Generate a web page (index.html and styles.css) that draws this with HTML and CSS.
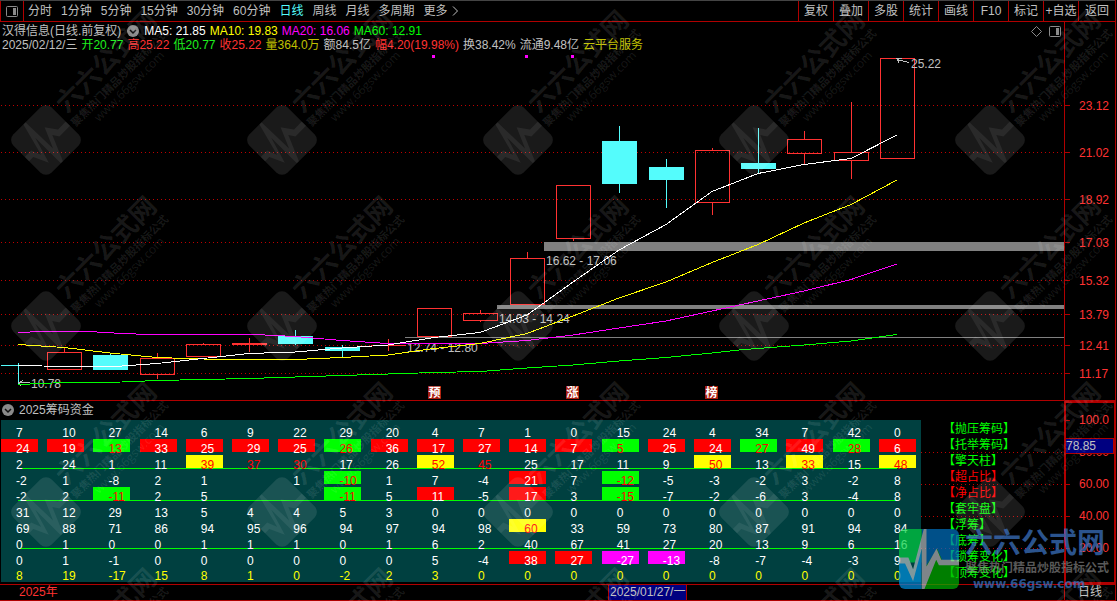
FILE: index.html
```html
<!DOCTYPE html>
<html lang="zh-CN">
<head>
<meta charset="utf-8">
<meta name="viewport" content="width=device-width, initial-scale=1">
<title>汉得信息 日线</title>
<link rel="stylesheet" href="styles.css">
</head>
<body>
<div class="app">
  <nav class="topbar">
    <button class="panel-toggle" aria-label="侧栏">
      <svg width="12" height="11" viewBox="0 0 12 11"><rect x=".5" y=".5" width="11" height="10" rx="1" fill="none" stroke="#8a8a8a"/><rect x="7" y="2" width="3" height="7" fill="#8a8a8a"/></svg>
    </button>
    <div class="periods">
      <button>分时</button><button>1分钟</button><button>5分钟</button><button>15分钟</button><button>30分钟</button><button>60分钟</button><button class="active">日线</button><button>周线</button><button>月线</button><button>多周期</button><button class="more">更多<svg width="7" height="10" viewBox="0 0 7 10"><path d="M1 .5 5.5 5 1 9.500" fill="none" stroke="#c0c0c0"/></svg></button>
    </div>
    <div class="tools">
      <button>复权</button><button>叠加</button><button>多股</button><button>统计</button><button>画线</button><button>F10</button><button>标记</button><button>+自选</button><button class="wide">返回</button>
    </div>
  </nav>

  <section class="price">
    <header class="quote">
      <div class="quote-text">
        <div class="line">
          <span class="name">汉得信息(日线.前复权)</span>
          <svg class="drop" width="12" height="12" viewBox="0 0 12 12"><circle cx="6" cy="6" r="6" fill="#8a8a8a"/><path d="M3 5l3 3 3-3" fill="none" stroke="#111" stroke-width="1.500"/></svg>
          <span class="white">MA5: 21.85</span><span class="yellow">MA10: 19.83</span><span class="magenta">MA20: 16.06</span><span class="green">MA60: 12.91</span>
        </div>
        <div class="line">
          <span>2025/02/12/三</span><span class="lime">开20.77</span><span class="up">高25.22</span><span class="lime">低20.77</span><span class="up">收25.22</span><span class="gold">量364.0万</span><span>额84.5亿</span><span class="up">幅4.20(19.98%)</span><span>换38.42%</span><span>流通9.48亿</span><span class="gold">云平台服务</span>
        </div>
      </div>
      <div class="quote-icons">
        <svg width="11" height="11" viewBox="0 0 11 11"><path d="M5.500.5l5 5-5 5-5-5z" fill="none" stroke="#8a8a8a"/></svg>
        <svg width="12" height="11" viewBox="0 0 12 11"><rect x=".5" y=".5" width="11" height="10" rx="1" fill="none" stroke="#8a8a8a"/><rect x="7" y="2" width="3" height="7" fill="#8a8a8a"/></svg>
      </div>
      <div class="quote-axis"></div>
    </header>

    <svg class="kline" viewBox="0 52 1115 348" role="img" aria-label="日线K线图">
      <path class="grid" d="M1 105.500H1064M1 152.500H1064M1 199.500H1064M1 242.500H1064M1 280.500H1064M1 314.500H1064M1 345.500H1064M1 373.500H1064"/>
      <path class="axis" d="M1064.500 52V400M1065 105.500h5M1065 152.500h5M1065 199.500h5M1065 242.500h5M1065 280.500h5M1065 314.500h5M1065 345.500h5M1065 373.500h5"/>
      <g class="scale">
        <text x="1079" y="110">23.12</text><text x="1079" y="157">21.02</text><text x="1079" y="204">18.92</text><text x="1079" y="247">17.03</text><text x="1079" y="285">15.32</text><text x="1079" y="319">13.79</text><text x="1079" y="350">12.41</text><text x="1079" y="378">11.17</text>
      </g>
      <g class="rise">
        <path d="M64.500 348V352M157.500 353V358M157.500 374V379M203.500 343V344M249.500 338V352M388.500 339V351M480.500 310V313M480.500 321V322M527.500 252V258M573.500 239V241M712.500 148V150M712.500 203V215M804.500 131V139M804.500 154V164M851.500 102V152M851.500 161V179M371 345.500H406M232 343.500H267M232 344.500H267"/>
        <rect x="47.500" y="352.500" width="34" height="17"/><rect x="140.500" y="358.500" width="34" height="16"/><rect x="186.500" y="344.500" width="34" height="12"/><rect x="417.500" y="308.500" width="34" height="28"/><rect x="463.500" y="313.500" width="34" height="7"/><rect x="510.500" y="258.500" width="34" height="46"/><rect x="556.500" y="185.500" width="34" height="53"/><rect x="695.500" y="150.500" width="34" height="52"/><rect x="787.500" y="139.500" width="34" height="14"/><rect x="834.500" y="152.500" width="34" height="8"/><rect x="880.500" y="58.500" width="34" height="100"/>
      </g>
      <g class="fall">
        <path d="M1 365.500H19M18.500 363V384M110.500 353V355M295.500 330V345M342.500 345V357M619.500 126V193M666.500 159V208M758.500 128V173"/>
        <rect x="93" y="355" width="35" height="15"/><rect x="278" y="336" width="35" height="8"/><rect x="325" y="347" width="35" height="4"/><rect x="602" y="141" width="35" height="43"/><rect x="649" y="167" width="35" height="13"/><rect x="741" y="163" width="35" height="6"/>
      </g>
      <g class="gap">
        <rect x="544" y="242" width="520" height="9"/><rect x="497" y="305" width="567" height="4"/><rect x="405" y="337" width="659" height="1"/>
      </g>
      <g class="note">
        <text x="546" y="265">16.62 - 17.06</text><text x="499" y="323">14.03 - 14.24</text><text x="407" y="352">12.74 - 12.80</text><text x="911" y="68">25.22</text><text x="31" y="388">10.78</text>
        <path d="M909 62.500 897 59.500M902 58.500h-5l2 4M30 382.500H19M23 380.500l-4 2 2 3"/>
      </g>
      <g class="ma">
        <polyline stroke="#0f0" points="18,384.500 30,384 64,382.500 122,382 157,380.500 203,379.500 249,378.500 295,377 342,375.500 388,374 434,372.500 480,371.500 527,368 573,365 619,361 666,357.500 712,353 744,349.500 804,345 851,341 897,334.500"/>
        <polyline stroke="#f0f" points="18,332.500 42,331.500 88,331.500 122,333.500 150,334.500 255,334.500 295,336.500 342,340.500 388,343.500 480,343.500 527,340.500 573,335 619,328 666,321 712,311 744,304 804,291 851,279.500 897,264"/>
        <polyline stroke="#ff0" points="18,344.500 64,347.500 110,353 157,357.500 203,359 249,359.500 295,359.500 342,357.500 388,355 434,348.500 480,343.500 527,333.500 573,316 619,298 666,282 712,262.500 758,244.500 804,223 851,204.500 897,180"/>
        <polyline stroke="#fff" points="18,365.500 42,366 115,366.500 157,363.500 203,358.500 249,353.500 295,352 342,348 388,345 434,337.500 480,332.500 527,315 573,282 619,250 666,224.500 712,191.500 758,173.500 804,164.500 851,158.500 897,135"/>
      </g>
      <g fill="#f0f"><rect x="432" y="55" width="3" height="3"/><rect x="525" y="55" width="3" height="3"/><rect x="571" y="55" width="3" height="3"/></g>
      <g class="flag">
        <rect x="428" y="386" width="13" height="13"/><text x="434.500" y="397">预</text>
        <rect x="566" y="386" width="13" height="13"/><text x="572.500" y="397">涨</text>
        <rect x="705" y="386" width="13" height="13"/><text x="711.500" y="397">榜</text>
      </g>
    </svg>
  </section>

  <section class="chips">
    <div class="chips-main">
      <header class="chips-head">
        <svg width="12" height="12" viewBox="0 0 12 12"><circle cx="6" cy="6" r="6" fill="#8a8a8a"/><path d="M3 5l3 3 3-3" fill="none" stroke="#111" stroke-width="1.500"/></svg>
        <span>2025筹码资金</span>
      </header>
      <div class="chips-body">
        <div class="sheet">
          <table>
            <colgroup><col span="19"><col class="last"></colgroup>
            <tbody>
            <tr><td>7<td>10<td>27<td>14<td>6<td>9<td>22<td>29<td>20<td>4<td>7<td>1<td>0<td>15<td>24<td>4<td>34<td>7<td>42<td>0</tr>
            <tr><td class="r">24<td class="r">19<td class="g">13<td class="r">33<td class="r">25<td class="r">29<td class="r">25<td class="g">26<td class="r">36<td class="r">17<td class="r">27<td class="r">14<td class="r">7<td class="g">5<td class="r">25<td class="r">24<td class="g">27<td class="r">49<td class="g">28<td class="r">6</tr>
            <tr class="rule"><td>2<td>24<td>1<td>11<td class="y">39<td class="hot">37<td class="hot">30<td>17<td>26<td class="y">52<td class="hot">45<td>25<td>17<td>11<td>9<td class="y">50<td>13<td class="y">33<td>15<td class="y">48</tr>
            <tr><td>-2<td>1<td>-8<td>2<td>1<td><td>1<td class="g">-10<td>1<td>7<td>-4<td class="r">21<td>7<td class="g">-12<td>-5<td>-3<td>-2<td>3<td>-2<td>8</tr>
            <tr class="rule"><td>-2<td>2<td class="g">-11<td>2<td>5<td><td><td class="g">-11<td>5<td class="r">11<td>-5<td class="r">17<td>3<td class="g">-15<td>-7<td>-2<td>-6<td>3<td>-4<td>8</tr>
            <tr><td>31<td>12<td>29<td>13<td>5<td>4<td>4<td>5<td>3<td>0<td>0<td>0<td>0<td>0<td>0<td>0<td>0<td>0<td>0<td>0</tr>
            <tr><td>69<td>88<td>71<td>86<td>94<td>95<td>96<td>94<td>97<td>94<td>98<td class="y">60<td>33<td>59<td>73<td>80<td>87<td>91<td>94<td>84</tr>
            <tr class="rule"><td>0<td>1<td>0<td>0<td>1<td>1<td>1<td>0<td>1<td>6<td>2<td>40<td>67<td>41<td>27<td>20<td>13<td>9<td>6<td>16</tr>
            <tr><td>0<td>1<td>-1<td>0<td>0<td>0<td>0<td>0<td>0<td>5<td>-4<td class="r">38<td class="r">27<td class="m">-27<td class="m">-13<td>-8<td>-7<td>-4<td>-3<td>9</tr>
            <tr class="sum"><td>8<td>19<td>-17<td>15<td>8<td>1<td>0<td>-2<td>2<td>3<td>0<td>0<td>0<td>0<td>0<td>0<td>0<td>0<td>0<td>0</tr>
            </tbody>
          </table>
        </div>
        <ul class="legend">
          <li>【抛压筹码】</li><li>【托举筹码】</li><li>【擎天柱】</li><li class="hot">【超占比】</li><li class="hot">【净占比】</li><li>【套牢盘】</li><li>【浮筹】</li><li>【底筹】</li><li>【锁筹变化】</li><li>【顶筹变化】</li>
        </ul>
      </div>
    </div>
    <aside class="chips-axis">
      <ul><li>100.0</li><li>80.00</li><li>60.00</li><li>40.00</li><li>20.00</li></ul>
      <span class="cursor-value">78.85</span>
    </aside>
  </section>

  <footer class="timebar">
    <span class="year">2025年</span>
    <span class="cursor-date">2025/01/27/一</span>
    <button class="period">日线</button>
  </footer>

  <svg class="watermark" aria-hidden="true">
    <defs>
      <g id="mark" transform="rotate(-45)">
        <rect x="-27" y="-27" width="54" height="54" rx="8" fill="#fff" fill-opacity=".1"/>
        <path d="M-27-3h9l4 10L-5-27h3L-1 11 8-10l8 11h11v6H12L8 1-3 27h-3V-9l-8 27-7-15h-6z" fill="#fff" fill-opacity=".07"/>
        <text class="wm-title" x="33" y="-4">六六公式网</text>
        <text class="wm-sub" x="30" y="12">聚焦热门精品炒股指标公式</text>
        <text class="wm-url" x="50" y="25">www.66gsw.com</text>
      </g>
    </defs>
    <use href="#mark" x="46" y="140"/><use href="#mark" x="282" y="140"/><use href="#mark" x="518" y="140"/><use href="#mark" x="754" y="140"/><use href="#mark" x="990" y="140"/>
    <use href="#mark" x="46" y="326"/><use href="#mark" x="282" y="326"/><use href="#mark" x="518" y="326"/><use href="#mark" x="754" y="326"/><use href="#mark" x="990" y="326"/>
    <use href="#mark" x="46" y="512"/><use href="#mark" x="282" y="512"/><use href="#mark" x="518" y="512"/><use href="#mark" x="754" y="512"/><use href="#mark" x="990" y="512"/>
    <use href="#mark" x="46" y="698"/><use href="#mark" x="282" y="698"/><use href="#mark" x="518" y="698"/><use href="#mark" x="754" y="698"/><use href="#mark" x="990" y="698"/>
  </svg>

  <div class="brand">
    <svg width="60" height="60" viewBox="0 0 179 179">
      <defs><clipPath id="round"><rect width="179" height="179" rx="18"/></clipPath></defs>
      <g clip-path="url(#round)">
        <path d="M0 0h78v100H0z" fill="#00d040"/><path d="M0 90h28l14 40L68 50v129H0z" fill="#0090e0"/>
        <path d="M68 0h111v110H68z" fill="#0072c4"/><path d="M68 179V130l46-70 20 45h45v74z" fill="#00b400"/>
        <path d="M0 85h28l14 35L74 0h8v112l30-54 14 34h53v16h-60l-8-16-35 87h-8V58l-26 98-24-53H0z" fill="#b4bec4"/>
      </g>
    </svg>
    <div class="brand-text">
      <strong>六六公式网</strong>
      <span>聚焦热门精品炒股指标公式</span>
      <b>www.66gsw.com</b>
    </div>
  </div>
</div>
</body>
</html>
```
FILE: styles.css
```css
* { box-sizing: border-box; }

body {
  margin: 0;
  background: #000;
  color: #c0c0c0;
  font: 12px/14px "Liberation Sans", "Noto Sans CJK SC", sans-serif;
}

button {
  margin: 0;
  padding: 0;
  border: 0;
  background: none;
  color: inherit;
  font: inherit;
  white-space: nowrap;
  cursor: pointer;
}

ul { margin: 0; padding: 0; list-style: none; }

.app {
  position: relative;
  margin-right: 1px;
  border-right: 1px solid #b00000;
  overflow: hidden;
}

/* top bar */
.topbar {
  display: flex;
  height: 22px;
  border-top: 1px solid #444;
  border-bottom: 1px solid #b00000;
}
.panel-toggle {
  display: flex;
  align-items: center;
  justify-content: center;
  width: 24px;
  border: solid #b00000;
  border-width: 0 1px;
}
.periods { display: flex; gap: 9px; padding-left: 4px; flex: 1; }
.periods .active { color: #54fcfc; }
.more { display: flex; align-items: center; gap: 4px; }
.tools { display: flex; }
.tools button { width: 35px; border-left: 1px solid #b00000; }
.tools .wide { width: 37px; }

/* quote header */
.quote { display: flex; height: 30px; }
.quote-text { flex: 1; padding: 2px 0 0 2px; white-space: nowrap; }
.line { display: flex; align-items: center; gap: 4px; height: 14px; }
.drop { margin: 0 1px 0 2px; }
.quote-icons { display: flex; gap: 7px; padding: 4px 3px 0 0; }
.quote-axis { width: 51px; border-left: 1px solid #b00000; }

.white { color: #fff; }
.yellow { color: #ff0; }
.magenta { color: #f0f; }
.green { color: #0f0; }
.lime { color: #1ef01e; }
.up { color: #ff3232; }
.gold { color: #c0c000; }

/* candlestick chart */
.kline { display: block; width: 100%; height: auto; }
.kline path, .kline polyline, .kline rect { shape-rendering: crispEdges; }
.grid { stroke: #c00000; stroke-dasharray: 1 3; }
.axis { stroke: #b00000; fill: none; }
.scale { fill: #ff3232; }
.rise { stroke: #ff3232; fill: none; }
.fall { stroke: #54fcfc; fill: none; }
.fall rect { stroke: none; fill: #54fcfc; }
.gap { fill: #808080; }
.note { fill: #c0c0c0; }
.note path { stroke: #c0c0c0; fill: none; }
.ma { fill: none; }
.flag rect { fill: #a81c10; }
.flag text { fill: #fff; font-weight: bold; text-anchor: middle; }

/* chips panel */
.chips {
  display: grid;
  grid-template-columns: 1fr 51px;
  border-top: 1px solid #b00000;
}
.chips-main { padding-bottom: 2px; }
.chips-head {
  display: flex;
  align-items: center;
  gap: 5px;
  height: 19px;
  padding: 0 0 2px 2px;
}
.chips-body { display: grid; grid-template-columns: 1fr 143px; }
.sheet { margin-left: 1px; padding-top: 3px; background: #004040; }

table { width: 100%; border-collapse: collapse; table-layout: fixed; }
.last { width: 42px; }
td {
  height: 16px;
  padding: 4px 0 0 15px;
  color: #fff;
  line-height: 12px;
  background-repeat: no-repeat;
  background-size: 37px 13px;
}
.rule {
  background: linear-gradient(#0f0, #0f0) 17px 13px / calc(100% - 41px) 1px no-repeat;
}
.r { background-image: linear-gradient(#f00, #f00); }
.g { background-image: linear-gradient(#0f0, #0f0); color: #f00; }
.y { background-image: linear-gradient(#ff0, #ff0); color: #f00; }
.m { background-image: linear-gradient(#f0f, #f0f); }
td.hot, .legend .hot { color: #f00; }
.sum td { height: 15px; padding-top: 3px; color: #ff0; }

.legend li {
  height: 16px;
  padding-left: 22px;
  color: #0f0;
  line-height: 18px;
  white-space: nowrap;
}
.legend li:nth-child(2n + 3) {
  background: linear-gradient(90deg, #c00000 1px, transparent 1px) 0 0 / 4px 1px repeat-x;
}

.chips-axis { position: relative; border: 2px solid #b00000; border-width: 2px 1px 2px 2px; }
.chips-axis li {
  height: 32px;
  padding-left: 13px;
  color: #ff3232;
  line-height: 34px;
  background: linear-gradient(#b00000, #b00000) 0 17px / 4px 1px no-repeat;
}
.cursor-value {
  position: absolute;
  top: 35px;
  left: -1px;
  right: 0;
  border: 1px solid #b00000;
  background: #000080;
}

/* time bar */
.timebar {
  display: grid;
  grid-template-columns: 608fr 79px 377fr 51px;
  height: 17px;
  border: solid #b00000;
  border-width: 1px 0;
  line-height: 15px;
}
.year { padding-left: 19px; color: #ff3232; }
.cursor-date {
  padding-left: 1px;
  border: solid #b00000;
  border-width: 0 1px;
  background: #000080;
  white-space: nowrap;
}
.period { grid-column: 4; border-left: 1px solid #b00000; }

/* overlays */
.watermark {
  position: absolute;
  inset: 0;
  width: 100%;
  height: 100%;
  pointer-events: none;
}
.watermark text { fill: #fff; fill-opacity: .1; }
.wm-title { font-size: 26px; font-weight: bold; }
.wm-sub { font-size: 11px; font-weight: bold; }
.wm-url { font-family: "Open Sans", sans-serif; font-size: 12px; }

.brand {
  position: absolute;
  right: 6px;
  bottom: 10px;
  display: flex;
  gap: 6px;
  pointer-events: none;
}
.brand svg { opacity: .7; }
.brand-text { display: flex; flex-direction: column; white-space: nowrap; }
.brand strong { color: rgba(58, 112, 190, .75); font-size: 28px; line-height: 30px; }
.brand span { color: rgba(150, 150, 150, .6); font-weight: bold; line-height: 18px; }
.brand b {
  padding-left: 8px;
  color: rgba(58, 112, 190, .75);
  font: bold 12px/14px "DejaVu Sans", sans-serif;
}
```
